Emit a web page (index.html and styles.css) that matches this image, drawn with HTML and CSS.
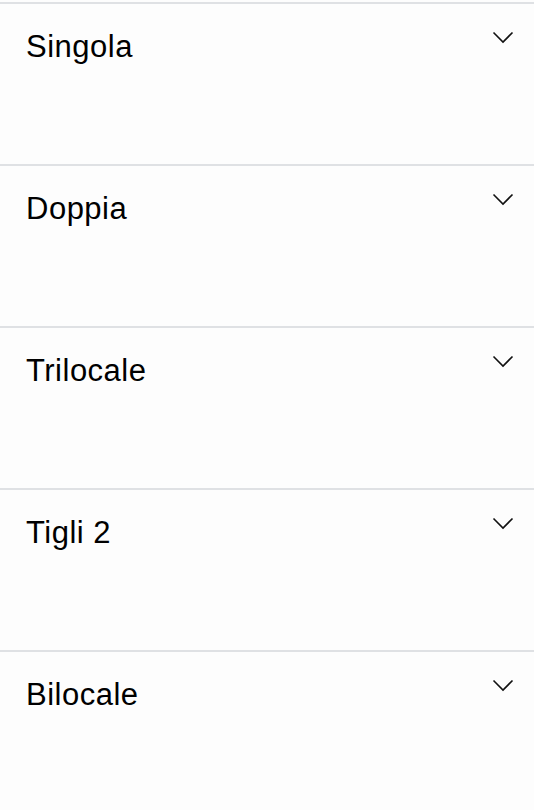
FILE: index.html
```html
<!DOCTYPE html>
<html lang="it">
<head>
  <meta charset="UTF-8" />
  <meta name="viewport" content="width=device-width, initial-scale=1.0" />
  <title>Camere</title>
  <link rel="stylesheet" href="styles.css">
</head>
<body>
  <div class="rooms">
    <div class="room">
      <div class="room-head">
        <h3 class="room-title">Singola</h3>
        <svg class="chevron" width="22" height="13" viewBox="0 0 22 13"><path d="M1.5 1.5 L11 11 L20.5 1.5" /></svg>
      </div>
    </div>
    <div class="room">
      <div class="room-head">
        <h3 class="room-title">Doppia</h3>
        <svg class="chevron" width="22" height="13" viewBox="0 0 22 13"><path d="M1.5 1.5 L11 11 L20.5 1.5" /></svg>
      </div>
    </div>
    <div class="room">
      <div class="room-head">
        <h3 class="room-title">Trilocale</h3>
        <svg class="chevron" width="22" height="13" viewBox="0 0 22 13"><path d="M1.5 1.5 L11 11 L20.5 1.5" /></svg>
      </div>
    </div>
    <div class="room">
      <div class="room-head">
        <h3 class="room-title">Tigli 2</h3>
        <svg class="chevron" width="22" height="13" viewBox="0 0 22 13"><path d="M1.5 1.5 L11 11 L20.5 1.5" /></svg>
      </div>
    </div>
    <div class="room">
      <div class="room-head">
        <h3 class="room-title">Bilocale</h3>
        <svg class="chevron" width="22" height="13" viewBox="0 0 22 13"><path d="M1.5 1.5 L11 11 L20.5 1.5" /></svg>
      </div>
    </div>
  </div>
</body>
</html>
```

FILE: styles.css
```css
body {
  margin: 0;
  padding: 0;
  background-color: #fdfdfd;
  font-family: 'Liberation Sans', Arial, sans-serif;
  color: #000;
}

.rooms {
  padding-top: 2px;
}

.room {
  border-top: 2px solid #dfe1e4;
  height: 160px;
}

.room-head {
  display: flex;
  justify-content: space-between;
  align-items: flex-start;
  padding: 25px 20px 0 26px;
}

.room-title {
  margin: 0;
  font-size: 31px;
  font-weight: normal;
  line-height: 36px;
  letter-spacing: 0.5px;
}

.chevron {
  margin-top: 2px;
  fill: none;
  stroke: #111;
  stroke-width: 1.6;
}
```
